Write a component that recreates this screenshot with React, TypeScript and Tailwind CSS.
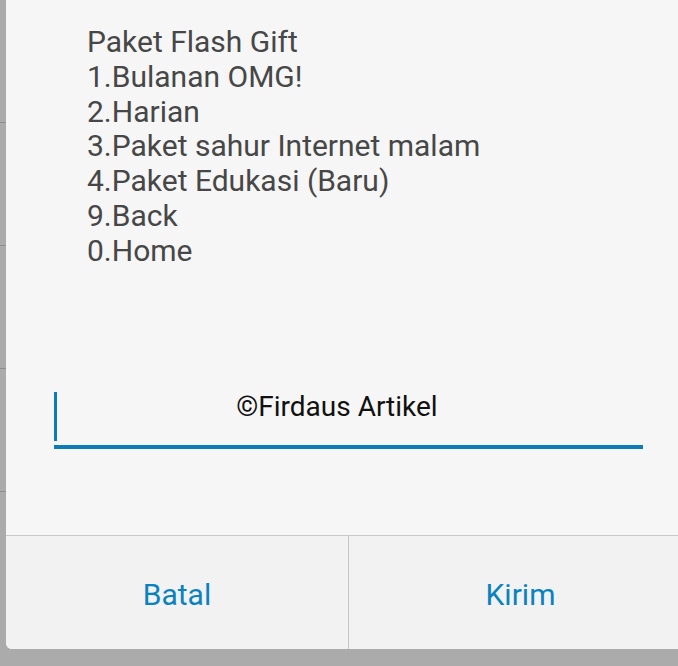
import React from "react";

const menu = [
  "Paket Flash Gift",
  "1.Bulanan OMG!",
  "2.Harian",
  "3.Paket sahur Internet malam",
  "4.Paket Edukasi (Baru)",
  "9.Back",
  "0.Home",
];

const App: React.FC = () => {
  return (
    <div className="flex h-[666px] w-[678px] overflow-hidden bg-[#ababab] font-['Roboto',sans-serif]">
      {/* list behind the dialog */}
      <div className="flex w-[6px] shrink-0 flex-col">
        {[0, 1, 2, 3].map((i) => (
          <div key={i} className="h-[123px] shrink-0 border-b border-[#8e8e8e]" />
        ))}
      </div>

      <div className="flex h-[649px] w-[686px] shrink-0 flex-col overflow-hidden rounded-bl-[6px] bg-[#f6f6f6]">
        <div className="flex flex-1 flex-col">
          <div className="pl-[81px] pt-[25px] text-[30px] leading-[34.8px] text-[#474747]">
            {menu.map((line) => (
              <div key={line}>{line}</div>
            ))}
          </div>

          <div className="ml-[48px] mt-[123px] flex w-[589px] items-start gap-[4px] border-b-4 border-[#0b7cb8]">
            <div className="mb-[4px] h-[49px] w-[3px] shrink-0 bg-[#0b7cb8]" />
            <div className="flex-1 pr-[30px] text-center text-[28px] leading-[30px] text-[#111]">
              ©Firdaus Artikel
            </div>
          </div>
        </div>

        <div className="flex h-[114px] shrink-0 border-t border-[#c8c8c8] bg-[#f2f2f2] text-[30px] text-[#0b82c0]">
          <button className="flex w-[343px] items-center justify-center border-r border-[#c8c8c8] pt-[4px]">
            Batal
          </button>
          <button className="flex flex-1 items-center justify-center pt-[4px]">Kirim</button>
        </div>
      </div>
    </div>
  );
};

export default App;
